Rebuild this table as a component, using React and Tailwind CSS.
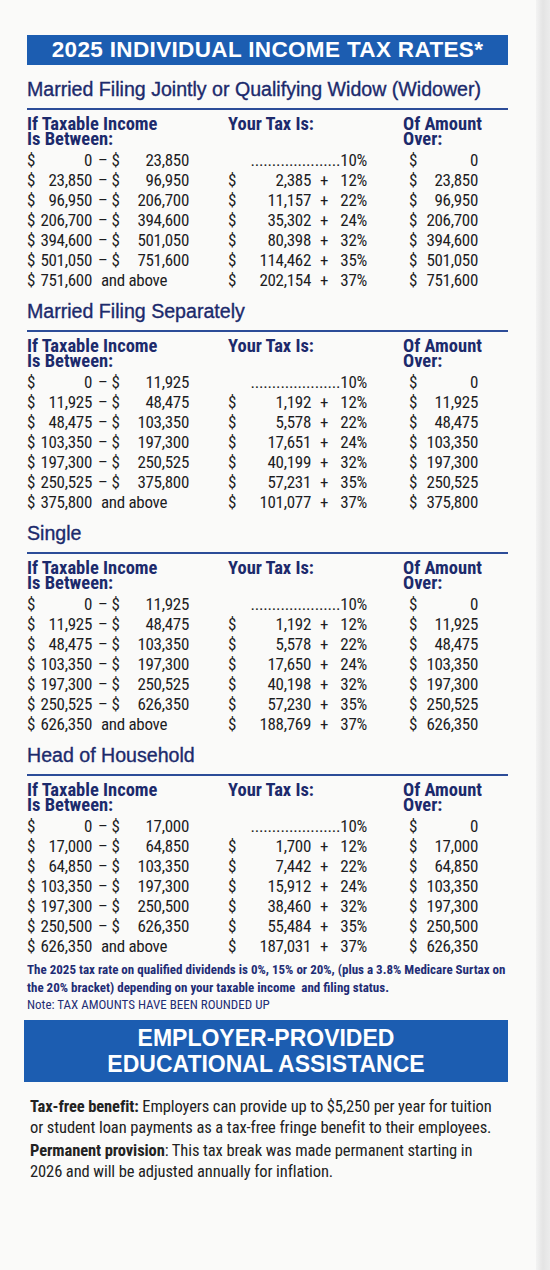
import React from "react";

// condensed face for the tables, Arial-width face for the headings
const NARROW = "font-['Roboto_Condensed','Roboto',sans-serif]";
const WIDE = "font-['Liberation_Sans',Arial,sans-serif]";

const sections = [
  {
    title: "Married Filing Jointly or Qualifying Widow (Widower)",
    rows: [
      ["0", "23,850", null, "10%", "0"],
      ["23,850", "96,950", "2,385", "12%", "23,850"],
      ["96,950", "206,700", "11,157", "22%", "96,950"],
      ["206,700", "394,600", "35,302", "24%", "206,700"],
      ["394,600", "501,050", "80,398", "32%", "394,600"],
      ["501,050", "751,600", "114,462", "35%", "501,050"],
      ["751,600", null, "202,154", "37%", "751,600"],
    ],
  },
  {
    title: "Married Filing Separately",
    rows: [
      ["0", "11,925", null, "10%", "0"],
      ["11,925", "48,475", "1,192", "12%", "11,925"],
      ["48,475", "103,350", "5,578", "22%", "48,475"],
      ["103,350", "197,300", "17,651", "24%", "103,350"],
      ["197,300", "250,525", "40,199", "32%", "197,300"],
      ["250,525", "375,800", "57,231", "35%", "250,525"],
      ["375,800", null, "101,077", "37%", "375,800"],
    ],
  },
  {
    title: "Single",
    rows: [
      ["0", "11,925", null, "10%", "0"],
      ["11,925", "48,475", "1,192", "12%", "11,925"],
      ["48,475", "103,350", "5,578", "22%", "48,475"],
      ["103,350", "197,300", "17,650", "24%", "103,350"],
      ["197,300", "250,525", "40,198", "32%", "197,300"],
      ["250,525", "626,350", "57,230", "35%", "250,525"],
      ["626,350", null, "188,769", "37%", "626,350"],
    ],
  },
  {
    title: "Head of Household",
    rows: [
      ["0", "17,000", null, "10%", "0"],
      ["17,000", "64,850", "1,700", "12%", "17,000"],
      ["64,850", "103,350", "7,442", "22%", "64,850"],
      ["103,350", "197,300", "15,912", "24%", "103,350"],
      ["197,300", "250,500", "38,460", "32%", "197,300"],
      ["250,500", "626,350", "55,484", "35%", "250,500"],
      ["626,350", null, "187,031", "37%", "626,350"],
    ],
  },
];

const Row = ({ row }) => {
  const [from, to, base, rate, over] = row;
  return (
    <div className="flex h-[20px] items-center whitespace-nowrap text-[17px] leading-[20px] tracking-[-0.3px] text-[#1d1d1f]">
      <div className="flex w-[162px]">
        <span className="w-[10px]">$</span>
        <span className="w-[55px] text-right">{from}</span>
        {to ? (
          <>
            <span className="pl-[6px]">–</span>
            <span className="pl-[4px]">$</span>
            <span className="flex-1 text-right">{to}</span>
          </>
        ) : (
          <span className="pl-[9px]">and above</span>
        )}
      </div>

      <div className="ml-[39px] flex w-[139px]">
        {base ? (
          <>
            <div className="flex w-[83px]">
              <span>$</span>
              <span className="flex-1 text-right">{base}</span>
            </div>
            <div className="flex flex-1 pl-[9px]">
              <span>+</span>
              <span className="flex-1 text-right">{rate}</span>
            </div>
          </>
        ) : (
          <span className="w-full text-right">
            <span className="tracking-[-0.2px]">.....................</span>
            {rate}
          </span>
        )}
      </div>

      <div className="ml-[42px] flex w-[69px]">
        <span>$</span>
        <span className="flex-1 text-right">{over}</span>
      </div>
    </div>
  );
};

const Section = ({ title, rows, first }) => (
  <div className={first ? "mt-[12px]" : "mt-[9px]"}>
    <h2 className={`${WIDE} h-[24px] whitespace-nowrap text-[19.6px] leading-[24px] text-[#1c2a6c] [-webkit-text-stroke:0.35px_#1c2a6c]`}>
      {title}
    </h2>
    <div className="mt-[7px] h-[2px] bg-[#2c4c98]" />

    {/* column heads */}
    <div className="flex pt-[7px] text-[18.5px] leading-[15px] font-bold text-[#1c2a6c]">
      <div className="w-[201px]">
        If Taxable Income
        <br />
        Is Between:
      </div>
      <div className="w-[175px]">Your Tax Is:</div>
      <div>
        Of Amount
        <br />
        Over:
      </div>
    </div>

    <div className="mt-[3px]">
      {rows.map((r, i) => (
        <Row key={i} row={r} />
      ))}
    </div>
  </div>
);

export default function App() {
  return (
    <div className={`${NARROW} flex min-h-[1270px] w-[550px] bg-[#fafaf9]`}>
      <div className="w-[536px] pt-[35px] pl-[27px] pr-[28px]">
        {/* Title bar */}
        <div className={`${WIDE} flex h-[30px] items-center justify-center bg-[#1c5db1] text-[22.5px] font-bold tracking-[0.35px] text-white`}>
          2025 INDIVIDUAL INCOME TAX RATES*
        </div>

        {sections.map((s, i) => (
          <Section key={s.title} title={s.title} rows={s.rows} first={i === 0} />
        ))}

        {/* Footnote */}
        <div className="mt-[5px] whitespace-nowrap text-[13px] text-[#1f2d75]">
          <p className="leading-[18px] font-bold">
            The 2025 tax rate on qualified dividends is 0%, 15% or 20%, (plus a 3.8% Medicare Surtax on
            <br />
            the 20% bracket) depending on your taxable income&nbsp; and filing status.
          </p>
          <p className="leading-[16px]">Note: TAX AMOUNTS HAVE BEEN ROUNDED UP</p>
        </div>

        {/* Educational assistance */}
        <div className={`${WIDE} -ml-[3px] mt-[7px] flex h-[62px] flex-col items-center justify-center bg-[#1c5db1] text-[23px] leading-[26px] font-bold text-white`}>
          <span>EMPLOYER-PROVIDED</span>
          <span>EDUCATIONAL ASSISTANCE</span>
        </div>

        <div className="mt-[14px] whitespace-nowrap pl-[3px] text-[16.5px] leading-[21px] tracking-[-0.1px] text-[#222]">
          <p>
            <span className="font-bold">Tax-free benefit:</span> Employers can provide up to $5,250 per year for tuition
            <br />
            or student loan payments as a tax-free fringe benefit to their employees.
          </p>
          <p className="mt-[2px]">
            <span className="font-bold">Permanent provision</span>: This tax break was made permanent starting in
            <br />
            2026 and will be adjusted annually for inflation.
          </p>
        </div>
      </div>

      {/* paper fold shadow on the right edge */}
      <div className="w-[14px] bg-gradient-to-r from-[#f3f3f3] via-[#e4e4e4] to-[#ececec]" />
    </div>
  );
}
